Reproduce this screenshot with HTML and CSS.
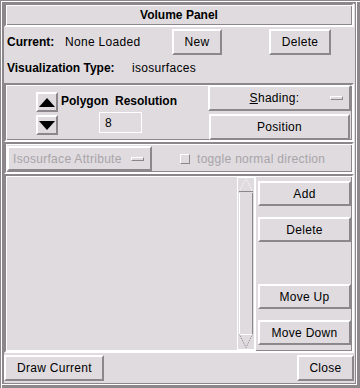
FILE: index.html
```html
<!DOCTYPE html>
<html>
<head>
<meta charset="utf-8">
<link rel="stylesheet" href="styles.css">
</head>
<body>
<div class="window">
  <div class="title etched">Volume Panel</div>

  <div class="row current">
    <span class="b lbl-cur">Current:</span>
    <span class="val-cur">None Loaded</span>
    <div class="btn btn-new">New</div>
    <div class="btn btn-del">Delete</div>
  </div>

  <div class="row vis">
    <span class="b lbl-vis">Visualization Type:</span>
    <span>isosurfaces</span>
  </div>

  <div class="etched sec1">
    <div class="arrows">
      <div class="arrow">
        <svg width="16" height="9" viewBox="0 0 16 9"><polygon points="8,0 16,9 0,9" fill="#000"/></svg>
      </div>
      <div class="arrow">
        <svg width="16" height="9" viewBox="0 0 16 9"><polygon points="0,0 16,0 8,9" fill="#000"/></svg>
      </div>
    </div>
    <div class="poly">
      <div class="b poly-lbl">Polygon&nbsp; Resolution</div>
      <div class="field">8</div>
    </div>
    <div class="rbtns">
      <div class="btn opt shading"><span class="opt-txt"><u>S</u>hading:</span><i class="ind"></i></div>
      <div class="btn pos">Position</div>
    </div>
  </div>

  <div class="etched sec2">
    <div class="btn opt dis attr"><span class="opt-txt">Isosurface Attribute</span><i class="ind"></i></div>
    <div class="chk"><i class="box"></i><span>toggle normal direction</span></div>
  </div>

  <div class="etched listrow">
    <div class="listbox">
      <div class="list"></div>
      <div class="sb">
        <div class="sb-arrow">
          <svg width="14" height="14" viewBox="0 0 14 14"><polyline points="0.5,13.5 7,0.5 13.5,13.5" fill="none" stroke="#fff" stroke-dasharray="1 1"/><line x1="0" y1="13.5" x2="14" y2="13.5" stroke="#8b878b"/></svg>
        </div>
        <div class="sb-trough"></div>
        <div class="sb-arrow">
          <svg width="14" height="14" viewBox="0 0 14 14"><line x1="0" y1="0.5" x2="14" y2="0.5" stroke="#fff"/><polyline points="0.5,0.5 7,13.5 13.5,0.5" fill="none" stroke="#8b878b" stroke-dasharray="1 1"/></svg>
        </div>
      </div>
    </div>
    <div class="lbtns">
      <div class="btn lb">Add</div>
      <div class="btn lb">Delete</div>
      <div class="spacer"></div>
      <div class="btn lb">Move Up</div>
      <div class="btn lb">Move Down</div>
    </div>
  </div>

  <div class="bottom">
    <div class="btn draw">Draw Current</div>
    <div class="btn close">Close</div>
  </div>
</div>
</body>
</html>
```

FILE: styles.css
```css
:root {
  --bg: #dfdbdf;
  --dk: #8b878b;
  --lt: #ffffff;
}
* { box-sizing: border-box; }
html, body { margin: 0; padding: 0; }
body {
  background: var(--bg);
  font-family: "Liberation Sans", Arial, sans-serif;
  font-size: 12px;
  color: #000;
}
.window {
  width: 360px;
  height: 388px;
  padding: 3px 6px 7px 4px;
  display: flex;
  flex-direction: column;
  box-shadow:
    inset 1px 1px 0 var(--dk),
    inset 2px 2px 0 var(--lt),
    inset -3px -3px 0 var(--dk),
    inset -4px -4px 0 var(--lt),
    inset 4px 4px 0 var(--dk),
    inset -5px -5px 0 var(--dk);
}
.window > * { flex-shrink: 0; }
.b { font-weight: bold; }
.etched {
  border: 2px solid;
  border-color: var(--dk) var(--lt) var(--lt) var(--dk);
  box-shadow: inset 1px 1px 0 var(--lt), inset -1px -1px 0 var(--dk);
}
.btn {
  display: flex;
  align-items: center;
  justify-content: center;
  border: 2px solid;
  border-color: var(--lt) var(--dk) var(--dk) var(--lt);
  letter-spacing: 0.3px;
  white-space: nowrap;
}
.title {
  height: 24px;
  display: flex;
  align-items: center;
  justify-content: center;
  font-weight: bold;
}
.row {
  display: flex;
  align-items: center;
}
.current { margin-top: 2px; height: 26px; padding-left: 3px; }
.lbl-cur { width: 58px; }
.val-cur { width: 107px; letter-spacing: 0.3px; }
.btn-new { width: 50px; height: 26px; }
.btn-del { width: 62px; height: 26px; margin-left: 47px; }
.vis { height: 26px; padding-left: 3px; letter-spacing: 0.3px; }
.lbl-vis { width: 125px; letter-spacing: 0; }

.sec1 {
  margin-top: 2px;
  height: 59px;
  display: flex;
  padding: 0 1px;
}
.arrows {
  margin-left: 29px;
  margin-top: 7px;
  display: flex;
  flex-direction: column;
  gap: 3px;
}
.arrow {
  width: 22px;
  height: 20px;
  border: 2px solid;
  border-color: var(--lt) var(--dk) var(--dk) var(--lt);
  display: flex;
  align-items: center;
  justify-content: center;
}
.arrow svg { display: block; }
.poly {
  margin-left: 3px;
  margin-top: 9px;
  display: flex;
  flex-direction: column;
  align-items: flex-start;
}
.poly-lbl { line-height: 14px; }
.field {
  margin-left: 38px;
  margin-top: 4px;
  width: 43px;
  height: 21px;
  border: 1px solid var(--lt);
  padding-left: 5px;
  display: flex;
  align-items: center;
}
.rbtns {
  margin-left: auto;
  width: 143px;
  display: flex;
  flex-direction: column;
  align-items: flex-end;
}
.shading { width: 143px; height: 26px; }
.pos { width: 141px; height: 26px; margin-top: 3px; margin-right: 1px; }
.opt { position: relative; }
.opt-txt { margin-right: 10px; }
.ind {
  position: absolute;
  right: 6px;
  top: 50%;
  margin-top: -2px;
  width: 13px;
  height: 4px;
  border: 1px solid;
  border-color: var(--lt) var(--dk) var(--dk) var(--lt);
}
.sec2 {
  height: 32px;
  display: flex;
  align-items: center;
  padding: 1px 1px 0;
}
.attr { width: 145px; height: 25px; color: #a8a4a8; justify-content: flex-start; padding-left: 4px; }
.attr .opt-txt { margin-right: 0; }
.chk {
  margin-left: 28px;
  display: flex;
  align-items: center;
  color: #a8a4a8;
  letter-spacing: 0.3px;
}
.box {
  width: 10px;
  height: 10px;
  margin-right: 7px;
  border: 1px solid;
  border-color: var(--lt) var(--dk) var(--dk) var(--lt);
}
.listrow {
  height: 179px;
  display: flex;
  padding: 0 1px 0 0;
}
.listbox {
  width: 250px;
  display: flex;
  border: 1px solid var(--lt);
}
.list { flex: 1; }
.sb {
  width: 18px;
  display: flex;
  flex-direction: column;
  border: 1px solid var(--lt);
  padding: 0 1px;
}
.sb-arrow { height: 15px; display: flex; justify-content: center; }
.sb-trough { flex: 1; border-left: 1px solid var(--lt); border-right: 1px solid var(--dk); }
.lbtns {
  flex: 1;
  display: flex;
  flex-direction: column;
  padding: 5px 0 6px 2px;
  gap: 11px;
}
.lb { height: 25px; }
.spacer { flex: 1; }
.bottom {
  margin-top: 2px;
  display: flex;
  justify-content: space-between;
}
.draw { width: 100px; height: 26px; justify-content: flex-start; padding-left: 11px; }
.close { width: 57px; height: 26px; }
```
